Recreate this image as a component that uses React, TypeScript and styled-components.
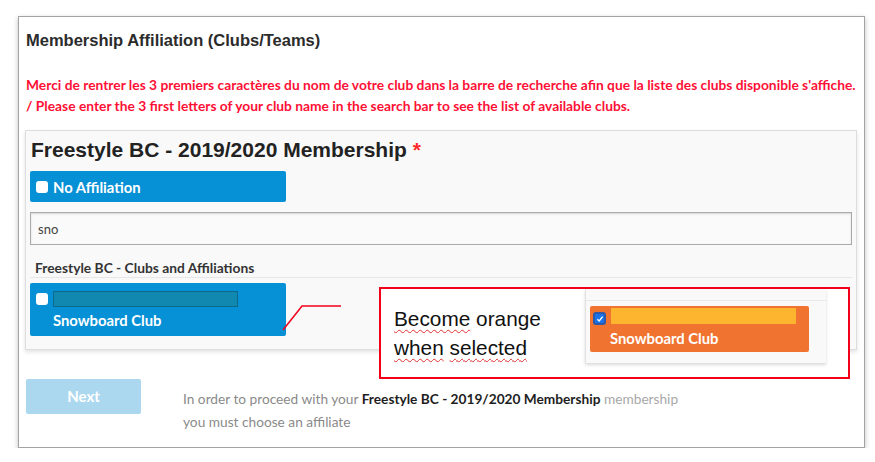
import React from 'react'
import styled, { createGlobalStyle } from 'styled-components'

const GlobalStyle = createGlobalStyle`
  body {
    margin: 0;
    background: #fff;
    font-family: 'Lato', 'Liberation Sans', sans-serif;
  }
`

const Page = styled.div`
  padding: 16px 0 0 18px;
  width: 847px;
`

const Card = styled.div`
  position: relative;
  border: 1px solid #a3a3a3;
  box-shadow: 0 2px 5px rgba(0, 0, 0, 0.25);
  background: #fff;
  padding: 13px 7px 14px 6px;
`

const Title = styled.h2`
  margin: 0 0 0 1px;
  font-family: 'Liberation Sans', Arial, sans-serif;
  font-size: 16.5px;
  line-height: 20px;
  font-weight: bold;
  color: #2b2b2b;
`

const Notice = styled.p`
  margin: 23.5px 0 0 1px;
  font-size: 13.8px;
  line-height: 21px;
  font-weight: bold;
  color: #ff1036;
  white-space: nowrap;
`

const Panel = styled.div`
  margin-top: 14.5px;
  background: #f9f9f9;
  border: 1px solid #dedede;
  box-shadow: 0 2px 4px rgba(0, 0, 0, 0.12);
  padding: 4px 4px 13px 4px;
  display: flex;
  flex-direction: column;
`

const PanelHeading = styled.h3`
  margin: 0 0 6px 1px;
  font-family: 'Liberation Sans', Arial, sans-serif;
  font-size: 21px;
  line-height: 30px;
  font-weight: bold;
  color: #222;
`

const Required = styled.span`
  color: #ff2a2a;
`

const Option = styled.label<{ $tall?: boolean; $tone?: 'blue' | 'orange' }>`
  display: flex;
  align-items: ${(p) => (p.$tall ? 'flex-start' : 'center')};
  gap: ${(p) => (p.$tone === 'orange' ? '4px' : '5px')};
  width: ${(p) => (p.$tone === 'orange' ? '219px' : '256px')};
  height: ${(p) => (!p.$tall ? '31px' : p.$tone === 'orange' ? '46px' : '53px')};
  box-sizing: border-box;
  padding: ${(p) => (!p.$tall ? '0 6px' : p.$tone === 'orange' ? '2px 3px' : '8px 6px')};
  background: ${(p) => (p.$tone === 'orange' ? '#f07330' : '#0690d5')};
  border-radius: 2px;
  color: #fff;
  font-size: 14.8px;
  font-weight: bold;
`

const Box = styled.span<{ $checked?: boolean }>`
  flex: none;
  width: ${(p) => (p.$checked ? '13px' : '12px')};
  height: ${(p) => (p.$checked ? '13px' : '12px')};
  border-radius: 3px;
  box-sizing: border-box;
  background: ${(p) => (p.$checked ? '#1a73e8' : '#fff')};
  border: ${(p) => (p.$checked ? '2px solid #2c5aa8' : 'none')};
  margin-top: ${(p) => (p.$checked ? '4px' : '2px')};
  display: flex;
  align-items: center;
  justify-content: center;
`

const NoAffBox = styled(Box)`
  margin-top: 0;
`

const OptionBody = styled.div<{ $tone?: 'blue' | 'orange' }>`
  display: flex;
  flex-direction: column;
  gap: ${(p) => (p.$tone === 'orange' ? '5px' : '4px')};
  line-height: 18px;
`

const Redacted = styled.span<{ $tone?: 'blue' | 'orange' }>`
  display: block;
  width: 185px;
  height: 16px;
  box-sizing: border-box;
  background: ${(p) => (p.$tone === 'orange' ? '#fdb52f' : '#1188b0')};
  border: ${(p) => (p.$tone === 'orange' ? 'none' : '1px solid #0b6a8c')};
  margin-left: ${(p) => (p.$tone === 'orange' ? '1px' : '0')};
`

const Search = styled.input`
  margin-top: 10px;
  height: 33px;
  box-sizing: border-box;
  border: 1px solid #aaa;
  box-shadow: inset 0 1px 2px rgba(0, 0, 0, 0.15);
  background: #fafafa;
  padding: 0 7px;
  font-family: 'Lato', sans-serif;
  font-size: 13px;
  color: #444;
  outline: none;
`

const ListLabel = styled.div`
  margin-top: 12.5px;
  padding: 0 5px;
  border-bottom: 1px solid #e7e7e7;
  font-size: 13.8px;
  line-height: 19px;
  font-weight: bold;
  color: #333;
`

const ListWrap = styled.div`
  margin-top: 5px;
`

const Footer = styled.div`
  display: flex;
  align-items: flex-start;
  gap: 42px;
  margin-top: 29px;
  margin-left: 1px;
`

const NextButton = styled.button`
  flex: none;
  width: 115px;
  height: 35px;
  border: none;
  border-radius: 2px;
  background: #acd8ef;
  color: #fff;
  font-family: 'Lato', sans-serif;
  font-size: 15px;
  font-weight: bold;
`

const FooterText = styled.p`
  margin: 8.5px 0 0;
  font-size: 13.7px;
  line-height: 23px;
  color: #8a8a8a;
  width: 560px;

  strong {
    color: #1e1e1e;
  }
`

const Light = styled.span`
  color: #a8a8a8;
`

const Connector = styled.svg`
  position: absolute;
  left: 264px;
  top: 288px;
  overflow: visible;
`

const Annotation = styled.div`
  position: absolute;
  left: 360px;
  top: 270px;
  width: 471px;
  height: 92px;
  box-sizing: border-box;
  border: 2px solid #f2001a;
  background: #fff;
  display: flex;
  align-items: flex-start;
  padding-left: 13px;
`

const Note = styled.p`
  margin: 14.5px 0 0;
  width: 191px;
  flex: none;
  font-family: 'Liberation Sans', Arial, sans-serif;
  font-size: 20.8px;
  line-height: 29px;
  color: #111;
`

const Squiggle = styled.span`
  text-decoration: underline wavy #e03030;
  text-decoration-thickness: 1px;
  text-underline-offset: 3px;
`

const Snippet = styled.div`
  width: 241px;
  height: 74px;
  box-sizing: border-box;
  background: #f9f9f9;
  border-left: 1px solid #e2e2e2;
  box-shadow: 0 2px 3px rgba(0, 0, 0, 0.15);
  padding: 0 0 0 4px;
  display: flex;
  flex-direction: column;
`

const SnippetRule = styled.div`
  height: 11px;
  margin: 0 0 5px -4px;
  border-bottom: 1px solid #e8e8e8;
`

const Tick = () => (
  <svg width='8' height='8' viewBox='0 0 8 8'>
    <path d='M1.4 4.3 L3.2 6 L6.6 1.6' fill='none' stroke='#fff' strokeWidth='1.3' />
  </svg>
)

const App = () => {
  return (
    <Page>
      <GlobalStyle />
      <Card>
        <Title>Membership Affiliation (Clubs/Teams)</Title>
        <Notice>
          Merci de rentrer les 3 premiers caractères du nom de votre club dans la barre de recherche afin que la
          liste des clubs disponible s'affiche.
          <br />/ Please enter the 3 first letters of your club name in the search bar to see the list of available
          clubs.
        </Notice>

        <Panel>
          <PanelHeading>
            Freestyle BC - 2019/2020 Membership <Required>*</Required>
          </PanelHeading>
          <Option>
            <NoAffBox />
            No Affiliation
          </Option>
          <Search defaultValue='sno' />
          <ListLabel>Freestyle BC - Clubs and Affiliations</ListLabel>
          <ListWrap>
            <Option $tall>
              <Box />
              <OptionBody>
                <Redacted />
                Snowboard Club
              </OptionBody>
            </Option>
          </ListWrap>
        </Panel>

        <Footer>
          <NextButton>Next</NextButton>
          <FooterText>
            In order to proceed with your <strong>Freestyle BC - 2019/2020 Membership</strong>{' '}
            <Light>membership</Light>
            <br />
            you must choose an affiliate
          </FooterText>
        </Footer>

        <Connector width='60' height='26'>
          <polyline points='0,25 19,1 58,1' fill='none' stroke='#f2001a' strokeWidth='1.5' />
        </Connector>

        <Annotation>
          <Note>
            <Squiggle>Become</Squiggle> orange
            <br />
            <Squiggle>when</Squiggle> <Squiggle>selected</Squiggle>
          </Note>
          <Snippet>
            <SnippetRule />
            <Option $tall $tone='orange'>
              <Box $checked>
                <Tick />
              </Box>
              <OptionBody $tone='orange'>
                <Redacted $tone='orange' />
                Snowboard Club
              </OptionBody>
            </Option>
          </Snippet>
        </Annotation>
      </Card>
    </Page>
  )
}

export default App
